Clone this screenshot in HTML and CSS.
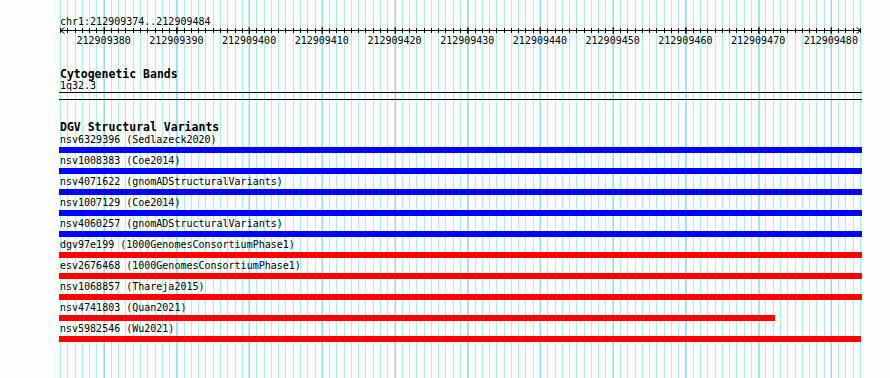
FILE: index.html
```html
<!DOCTYPE html>
<html>
<head>
<meta charset="utf-8">
<title>DGV Structural Variants</title>
<link rel="stylesheet" href="styles.css">
</head>
<body>
<div class="panel">
  <div class="locus">chr1:212909374..212909484</div>
  <div class="ruler">
    <div class="axis">
      <svg class="arrow arrow-left" width="6" height="7" viewBox="0 0 6 7"><path d="M4.5 0.5 L0.5 3.5 L4.5 6.5" fill="none" stroke="#000" stroke-width="1"/></svg>
      <svg class="arrow arrow-right" width="6" height="7" viewBox="0 0 6 7"><path d="M1.5 0.5 L5.5 3.5 L1.5 6.5" fill="none" stroke="#000" stroke-width="1"/></svg>
    </div>
    <div class="scale">
      <span>212909380</span><span>212909390</span><span>212909400</span><span>212909410</span><span>212909420</span><span>212909430</span><span>212909440</span><span>212909450</span><span>212909460</span><span>212909470</span><span>212909480</span>
    </div>
  </div>

  <div class="track">
    <div class="track-title">Cytogenetic Bands</div>
    <div class="band-label">1q32.3</div>
    <div class="band"></div>
  </div>

  <div class="track">
    <div class="track-title">DGV Structural Variants</div>
    <div class="feature"><div class="feature-label">nsv6329396 (Sedlazeck2020)</div><div class="feature-bar bar-blue" style="width:803px"></div></div>
    <div class="feature"><div class="feature-label">nsv1008383 (Coe2014)</div><div class="feature-bar bar-blue" style="width:803px"></div></div>
    <div class="feature"><div class="feature-label">nsv4071622 (gnomADStructuralVariants)</div><div class="feature-bar bar-blue" style="width:803px"></div></div>
    <div class="feature"><div class="feature-label">nsv1007129 (Coe2014)</div><div class="feature-bar bar-blue" style="width:803px"></div></div>
    <div class="feature"><div class="feature-label">nsv4060257 (gnomADStructuralVariants)</div><div class="feature-bar bar-blue" style="width:803px"></div></div>
    <div class="feature"><div class="feature-label">dgv97e199 (1000GenomesConsortiumPhase1)</div><div class="feature-bar bar-red" style="width:803px"></div></div>
    <div class="feature"><div class="feature-label">esv2676468 (1000GenomesConsortiumPhase1)</div><div class="feature-bar bar-red" style="width:803px"></div></div>
    <div class="feature"><div class="feature-label">nsv1068857 (Thareja2015)</div><div class="feature-bar bar-red" style="width:803px"></div></div>
    <div class="feature"><div class="feature-label">nsv4741803 (Quan2021)</div><div class="feature-bar bar-red" style="width:716px"></div></div>
    <div class="feature"><div class="feature-label">nsv5982546 (Wu2021)</div><div class="feature-bar bar-red" style="width:802px"></div></div>
  </div>
</div>
</body>
</html>
```

FILE: styles.css
```css
html, body {
  margin: 0;
  padding: 0;
  height: 100%;
}

body {
  background: #fbfefb;
  font-family: "DejaVu Sans Mono", "Liberation Mono", monospace;
  font-size: 10px;
  color: #000;
  overflow: hidden;
}

.panel {
  --minor: #aaeeee;
  --major: #88cce8;
  margin-left: 60px;
  width: 801px;
  height: 378px;
  box-sizing: border-box;
  padding-top: 16px;
  background-image:
    repeating-linear-gradient(to right, var(--major) 0 1px, transparent 1px 72.727px),
    repeating-linear-gradient(to right, var(--minor) 0 1px, transparent 1px 7.2727px);
  background-size: 800px 100%, 800px 100%;
  background-position: 43.636px 0, 0 0;
  background-repeat: repeat-x, repeat-x;
}

.locus {
  line-height: 11px;
  height: 11px;
  white-space: nowrap;
}

.ruler {
  height: 20px;
}

.axis {
  position: relative;
  height: 7px;
  background-image:
    linear-gradient(#000, #000),
    repeating-linear-gradient(to right, #000 0 1px, transparent 1px 72.727px),
    repeating-linear-gradient(to right, #000 0 1px, transparent 1px 7.2727px);
  background-size: 800px 1px, 800px 7px, 800px 5px;
  background-position: 0 3px, 43.636px 0, 0 1px;
  background-repeat: no-repeat, repeat-x, repeat-x;
}

.arrow {
  position: absolute;
  top: 0;
  display: block;
}

.arrow-left {
  left: 0;
}

.arrow-right {
  left: 795px;
}

.scale {
  display: flex;
  padding-left: 7.27px;
  line-height: 13px;
  white-space: nowrap;
}

.scale span {
  flex: 0 0 72.727px;
  text-align: center;
}

.track {
  margin-top: 23px;
}

.track-title {
  font-weight: bold;
  font-size: 11.5px;
  line-height: 9px;
  height: 9px;
  white-space: nowrap;
}

.band-label {
  line-height: 13px;
}

.band {
  margin-left: -1px;
  width: 803px;
  height: 6px;
  border-top: 1px solid #000;
  border-bottom: 1px solid #000;
}

.feature-label {
  line-height: 15px;
  height: 15px;
  white-space: nowrap;
}

.feature-bar {
  height: 6px;
  margin-left: -1px;
}

.bar-blue {
  background: #0000ff;
}

.bar-red {
  background: #ff0000;
}
```
